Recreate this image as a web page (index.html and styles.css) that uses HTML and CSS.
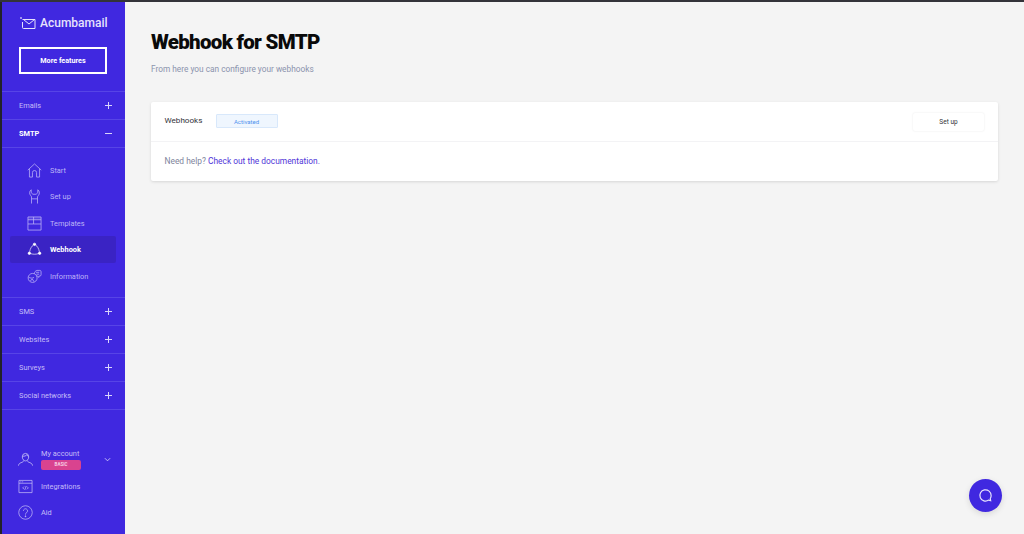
FILE: index.html
```html
<!DOCTYPE html>
<html lang="en">
<head>
<meta charset="utf-8">
<title>Webhook for SMTP</title>
<link rel="stylesheet" href="styles.css">
</head>
<body>
<div class="topline"></div>
<div class="app">
  <aside class="sidebar">
    <div class="logo">
      <svg class="logo-icon" viewBox="0 0 16 12" fill="none" stroke="currentColor" stroke-width="1"><path d="M2.500 2.500H15V11.500H3.500a1 1 0 0 1-1-1V5"/><path d="M3.500 2.500L9 7l5.500-4.500"/><path d="M1 0v2M0 1h2" stroke-width=".7"/></svg>
      <span>Acumbamail</span>
    </div>
    <a class="cta">More features</a>
    <nav class="menu">
      <div class="section"><span>Emails</span><i class="plus"></i></div>
      <div class="section open"><span>SMTP</span><i class="minus"></i></div>
      <div class="submenu">
        <div class="subitem">
          <svg viewBox="0 0 16 16" fill="none" stroke="currentColor" stroke-width=".8"><path d="M.8 7.600L8 1l7.200 6.600M2.600 6.200V15h3.200V10.200a2.200 2.200 0 0 1 4.400 0V15h3.200V6.200"/></svg>
          <span>Start</span>
        </div>
        <div class="subitem">
          <svg viewBox="0 0 16 16" fill="none" stroke="currentColor" stroke-width=".8"><path d="M4.500.8C2.500 2 2.200 5.200 3.800 6.800c.6.6 1 .9 1 1.700V15.500M11.500.8c2 1.200 2.300 4.400.7 6-.6.6-1 .9-1 1.700V15.500M4.500.8V4l1.800 1.600h3.400L11.500 4V.8M4.800 10.500h6.400"/></svg>
          <span>Set up</span>
        </div>
        <div class="subitem">
          <svg viewBox="0 0 16 16" fill="none" stroke="currentColor" stroke-width=".8"><path d="M1 1h14v14H1zM1 8.500h14M7 1v7.500M1 4h14"/><path d="M1 1h14v3H1z" fill="currentColor" fill-opacity=".2" stroke="none"/></svg>
          <span>Templates</span>
        </div>
        <div class="subitem active">
          <svg viewBox="0 0 16 16" fill="none" stroke="currentColor" stroke-width=".7"><path d="M6.800 3.200C5 4.500 3.400 7 2.800 10.500M9.200 3.200C11 4.500 12.600 7 13.200 10.500M3.500 12.300c3 1 6 1 9 0"/><circle cx="8" cy="2.500" r="1.300" fill="currentColor"/><circle cx="2.500" cy="12" r="1.300" fill="currentColor"/><circle cx="13.500" cy="12" r="1.300" fill="currentColor"/></svg>
          <span>Webhook</span>
        </div>
        <div class="subitem">
          <svg viewBox="0 0 16 16" fill="none" stroke="currentColor" stroke-width=".8"><circle cx="6" cy="9.500" r="4.800"/><path d="M8 5c0-2 1-3 2.500-3.500h3.200c.8 0 1.300.6 1.300 1.300v3.400c0 .8-.5 1.300-1.300 1.300h-1v1.500l-1.700-1.500H10M9.500 3.500h3.500M10 5.500h3M1.500 8.500c2 1.500 4 1.500 6 .5M3.500 13l2-2.500 2 3"/></svg>
          <span>Information</span>
        </div>
      </div>
      <div class="section"><span>SMS</span><i class="plus"></i></div>
      <div class="section"><span>Websites</span><i class="plus"></i></div>
      <div class="section"><span>Surveys</span><i class="plus"></i></div>
      <div class="section"><span>Social networks</span><i class="plus"></i></div>
    </nav>
    <div class="bottom">
      <div class="account">
        <svg viewBox="0 0 16 16" fill="none" stroke="currentColor" stroke-width=".8"><path d="M4.600 5.200a3.400 3.700 0 1 1 6.800 0c0 2.300-1.500 4.300-3.400 4.300S4.600 7.500 4.600 5.200zM4.800 4.500c1.800.2 3.500-.2 4.500-1.500.4.800 1 1.300 1.900 1.500M6 9.200c0 1.200-1.500 1.700-3 2.300-1.400.5-2.300 1.500-2.500 3M10 9.200c0 1.200 1.500 1.700 3 2.300 1.400.5 2.300 1.500 2.500 3"/></svg>
        <div class="account-text">
          <span>My account</span>
          <b class="plan">BASIC</b>
        </div>
        <svg class="chevron" viewBox="0 0 8 5" fill="none" stroke="currentColor" stroke-width="1"><path d="M1 1l3 3 3-3"/></svg>
      </div>
      <div class="bottom-item">
        <svg viewBox="0 0 16 16" fill="none" stroke="currentColor" stroke-width=".7"><path d="M1 1.500h14v13H1zM1 4.500h14M2.500 3h1M4.500 3h1M6.500 8L5 9.500 6.500 11M9.500 8l1.500 1.500L9.500 11M8.700 7.500l-1.400 4"/></svg>
        <span>Integrations</span>
      </div>
      <div class="bottom-item">
        <svg viewBox="0 0 16 16" fill="none" stroke="currentColor" stroke-width=".7"><circle cx="8" cy="8" r="7.200"/><path d="M5.800 6.200a2.200 2.200 0 1 1 3.400 1.900c-.8.500-1.200 1-1.200 2.100"/><circle cx="8" cy="12" r=".5" fill="currentColor"/></svg>
        <span>Aid</span>
      </div>
    </div>
  </aside>
  <main class="content">
    <h1>Webhook for SMTP</h1>
    <p class="subtitle">From here you can configure your webhooks</p>
    <section class="card">
      <div class="card-head">
        <span class="card-title">Webhooks</span>
        <span class="status">Activated</span>
        <a class="setup">Set up</a>
      </div>
      <p class="help">Need help? <a>Check out the documentation.</a></p>
    </section>
  </main>
</div>
<button class="chat" aria-label="Chat">
  <svg viewBox="0 0 16 16" fill="none" stroke="currentColor" stroke-width="1.300"><path d="M13.500 13.500l-2.100-.6A6 6 0 1 1 14 8c0 1.300-.3 2.300-.9 3.200z"/></svg>
</button>
</body>
</html>
```
FILE: styles.css
```css
* { box-sizing: border-box; }
html, body { height: 100%; }
body {
  margin: 0;
  display: flex;
  flex-direction: column;
  background: #f4f4f4;
  font-family: Roboto, "Liberation Sans", sans-serif;
  overflow: hidden;
}
.topline { height: 2px; background: #33333a; flex: none; }
.app { flex: 1; display: flex; min-height: 0; }

.sidebar {
  width: 125px;
  flex: none;
  display: flex;
  flex-direction: column;
  background: #4028e0;
  border-left: 2px solid #22222a;
  color: #fff;
}
.logo {
  display: flex;
  align-items: center;
  gap: 4px;
  height: 40px;
  padding: 1px 0 0 18px;
  font-size: 12px;
  font-weight: 500;
  color: #e6e2fc;
  flex: none;
}
.logo-icon { width: 16px; height: 12px; }
.cta {
  margin: 5px 18px 0 17px;
  height: 27px;
  flex: none;
  border: 2px solid #fff;
  display: flex;
  align-items: center;
  justify-content: center;
  font-size: 7.200px;
  font-weight: 700;
  padding-bottom: 1px;
}
.menu { margin-top: 17px; border-top: 1px solid #5744e6; }
.section {
  height: 28px;
  display: flex;
  align-items: center;
  justify-content: space-between;
  padding: 0 13px 0 17px;
  border-bottom: 1px solid #5744e6;
  font-size: 7.400px;
  font-weight: 400;
  color: #c5bdf8;
}
.section span { margin-top: -1px; }
.section.open { color: #fff; font-weight: 700; }
.plus, .minus { position: relative; width: 7px; height: 7px; display: block; margin-top: -1px; }
.plus::before, .minus::before {
  content: "";
  position: absolute;
  left: 0; right: 0; top: 3px;
  height: 1px;
  background: #d9d4fb;
}
.plus::after {
  content: "";
  position: absolute;
  top: 0; bottom: 0; left: 3px;
  width: 1px;
  background: #d9d4fb;
}
.submenu {
  height: 150px;
  padding: 8.500px 9px 0 8px;
  border-bottom: 1px solid #5744e6;
}
.subitem {
  height: 26.500px;
  display: flex;
  align-items: center;
  gap: 8px;
  padding: 1px 0 0 17px;
  font-size: 7.400px;
  font-weight: 400;
  color: #bdb4f7;
  border-radius: 2px;
}
.subitem svg { width: 15px; height: 15px; flex: none; }
.subitem.active { background: #3a23c4; color: #fff; font-weight: 700; }

.bottom { margin-top: auto; padding: 0 0 9px 16px; flex: none; }
.account, .bottom-item {
  display: flex;
  align-items: center;
  font-size: 7.400px;
  font-weight: 400;
  color: #c5bdf8;
}
.account { height: 24px; }
.account svg, .bottom-item svg { width: 15px; height: 15px; flex: none; color: #d3cdfa; }
.account-text {
  width: 40px;
  margin-left: 8px;
  display: flex;
  flex-direction: column;
  gap: 2px;
  white-space: nowrap;
}
.plan {
  height: 10px;
  background: #d9438f;
  border-radius: 2px;
  color: #f7cfe3;
  font-size: 4.500px;
  font-weight: 700;
  display: flex;
  align-items: center;
  justify-content: center;
}
.account .chevron { width: 7px; height: 5px; margin-left: 23px; }
.bottom-item { height: 26px; gap: 8px; margin-top: 2px; }
.bottom-item:last-child { margin-top: 0; }

.content { flex: 1; min-width: 0; padding: 27px 26px 0; }
h1 {
  margin: 0;
  font-size: 20.500px;
  line-height: 26px;
  font-weight: 900;
  letter-spacing: -.7px;
  color: #0a0a0a;
}
.subtitle {
  margin: 8px 0 0;
  font-size: 8.300px;
  line-height: 12px;
  color: #8b93ad;
}
.card {
  margin-top: 27px;
  background: #fff;
  border-radius: 2px;
  box-shadow: 0 1px 3px rgba(0, 0, 0, .12);
}
.card-head {
  height: 40px;
  display: flex;
  align-items: center;
  padding: 0 14px 0 13.500px;
  border-bottom: 1px solid #f3f3f5;
}
.card-title { width: 51px; font-size: 8.100px; color: #33333a; margin-top: -4px; }
.status {
  width: 62px;
  height: 14px;
  margin-top: -1px;
  background: #eff6fe;
  border: 1px solid #d8e8fb;
  border-radius: 1px;
  font-size: 6px;
  color: #4f94ee;
  display: flex;
  align-items: center;
  justify-content: center;
}
.setup {
  margin-left: auto;
  width: 71px;
  height: 18px;
  background: #fff;
  border-radius: 2px;
  box-shadow: 0 0 2px rgba(0, 0, 0, .1);
  font-size: 6.500px;
  color: #33333a;
  display: flex;
  align-items: center;
  justify-content: center;
}
.help {
  margin: 0;
  padding: 13px 13.500px 14px;
  font-size: 8.400px;
  line-height: 12px;
  color: #80849c;
}
.help a { color: #4f35d8; }
.chat {
  position: fixed;
  right: 22px;
  bottom: 22px;
  width: 33px;
  height: 33px;
  padding: 0;
  border: 0;
  border-radius: 50%;
  background: #4028e0;
  color: #e6e2fc;
  display: flex;
  align-items: center;
  justify-content: center;
  box-shadow: 0 2px 6px rgba(0, 0, 0, .12);
}
.chat svg { width: 15px; height: 15px; }
```
